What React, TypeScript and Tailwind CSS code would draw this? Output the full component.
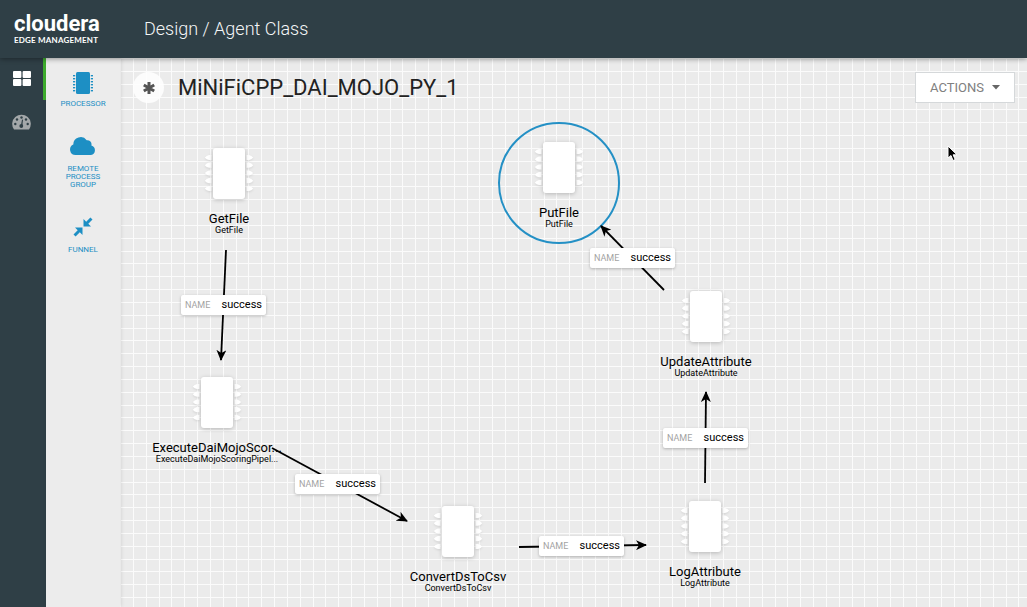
import React from "react";

type NodeItem = { id: string; x: number; y: number; name: string; type: string; selected?: boolean };
type Link = { id: string; x1: number; y1: number; x2: number; y2: number; lx: number; ly: number };

const nodes: NodeItem[] = [
  { id: "get", x: 109, y: 90, name: "GetFile", type: "GetFile" },
  { id: "put", x: 439, y: 84, name: "PutFile", type: "PutFile", selected: true },
  { id: "exec", x: 97, y: 319, name: "ExecuteDaiMojoScor...", type: "ExecuteDaiMojoScoringPipel..." },
  { id: "conv", x: 338, y: 448, name: "ConvertDsToCsv", type: "ConvertDsToCsv" },
  { id: "log", x: 585, y: 443, name: "LogAttribute", type: "LogAttribute" },
  { id: "upd", x: 586, y: 233, name: "UpdateAttribute", type: "UpdateAttribute" },
];

const links: Link[] = [
  { id: "l1", x1: 106, y1: 192, x2: 101, y2: 302, lx: 61, ly: 237 },
  { id: "l2", x1: 152, y1: 390, x2: 287, y2: 463, lx: 175, ly: 416 },
  { id: "l3", x1: 399, y1: 489, x2: 526, y2: 487, lx: 419, ly: 478 },
  { id: "l4", x1: 585, y1: 425, x2: 586, y2: 334, lx: 543, ly: 370 },
  { id: "l5", x1: 544, y1: 232, x2: 481, y2: 168, lx: 470, ly: 190 },
];

const offsets = [0, 13, 26, 39, 51, 64];
const pinRows = [9.5, 17.2, 25, 32.7, 40.5];

function Grid() {
  return (
    <svg className="absolute inset-0 size-full" aria-hidden="true">
      <defs>
        <pattern id="grid" x="0" y="0" width="77" height="77" patternUnits="userSpaceOnUse">
          {offsets.map((o) => (
            <g key={o} fill="#fbfbfb">
              <rect x={o} y="0" width="1" height="77" />
              <rect x="0" y={o} width="77" height="1" />
            </g>
          ))}
        </pattern>
      </defs>
      <rect width="100%" height="100%" fill="url(#grid)" />
    </svg>
  );
}

function Connections() {
  return (
    <svg className="absolute inset-0 size-full" aria-hidden="true">
      <defs>
        <marker id="arrow" viewBox="0 0 11 10" refX="10" refY="5" markerWidth="11" markerHeight="10" markerUnits="userSpaceOnUse" orient="auto">
          <path d="M0 0 11 5 0 10 3 5Z" fill="#000" />
        </marker>
      </defs>
      {links.map((l) => (
        <line key={l.id} x1={l.x1} y1={l.y1} x2={l.x2} y2={l.y2} stroke="#000" strokeWidth="1.8" markerEnd="url(#arrow)" />
      ))}
    </svg>
  );
}

function Chip() {
  return (
    <svg width="60" height="60" viewBox="-30 -4 60 60" className="-mt-1" aria-hidden="true">
      <g fill="#fff" className="drop-shadow-[0_1px_1px_rgba(0,0,0,0.1)]">
        {pinRows.map((y) => (
          <g key={y} transform={`translate(0 ${y})`}>
            <path d="M-17.500-2.600h-2.500q-2.500.6-4.200 2.600 1.700 2 4.200 2.600h2.500z" />
            <path d="M17.500-2.600h2.500q2.500.6 4.200 2.600-1.700 2-4.200 2.600h-2.500z" />
          </g>
        ))}
      </g>
      <rect x="-16" y="0" width="32" height="51" rx="3" fill="#fff" className="drop-shadow-[0_1px_2px_rgba(0,0,0,0.22)]" />
    </svg>
  );
}

function FlowNode({ node }: { node: NodeItem }) {
  return (
    <div className="absolute" style={{ left: node.x, top: node.y }}>
      {node.selected && (
        <div className="absolute -top-5 -left-[61px] size-[122px] rounded-full border-2 border-[#2490c5]" />
      )}
      <div className="relative flex w-40 -translate-x-1/2 flex-col items-center text-center text-black">
        <Chip />
        <div className="mt-[7px] text-[13px] leading-4 whitespace-nowrap">{node.name}</div>
        <div className="text-[9px] leading-[7px] whitespace-nowrap">{node.type}</div>
      </div>
    </div>
  );
}

function LinkLabel({ link }: { link: Link }) {
  return (
    <div
      className="absolute flex h-5 w-[85px] items-center justify-between rounded-xs bg-white px-1 leading-5 shadow-[0_1px_3px_rgba(0,0,0,0.25)]"
      style={{ left: link.lx, top: link.ly }}
    >
      <span className="text-[9px] text-[#a3a3a3]">NAME</span>
      <span className="text-[11px] text-black">success</span>
    </div>
  );
}

function ProcessorIcon() {
  return (
    <svg width="22" height="24" viewBox="0 0 22 24" fill="#1d8fc4" aria-hidden="true">
      <rect x="4" y="1" width="14" height="22" rx="1.5" />
      {[4, 7, 10, 13, 16, 19].map((y) => (
        <g key={y}>
          <rect x="1" y={y} width="2.200" height="1.400" />
          <rect x="18.800" y={y} width="2.200" height="1.400" />
        </g>
      ))}
    </svg>
  );
}

function CloudIcon() {
  return (
    <svg width="26" height="19" viewBox="0 0 26 19" fill="#1d8fc4" aria-hidden="true">
      <path d="M5.500 19A5.500 5.500 0 0 1 3.300 8.500 7.400 7.400 0 0 1 16.700 4.200 4.300 4.300 0 0 1 21.400 9.500 4.900 4.900 0 0 1 21 19Z" />
    </svg>
  );
}

function FunnelIcon() {
  return (
    <svg width="20" height="20" viewBox="0 0 20 20" fill="#1d8fc4" aria-hidden="true">
      <path d="M10.500 9.500V2l2.700 2.700L17.400.5l2.100 2.100-4.200 4.200L18 9.500Z" />
      <path d="M9.500 10.500V18l-2.700-2.700-4.200 4.200-2.100-2.100 4.200-4.200L2 10.500Z" />
    </svg>
  );
}

function Tool({ icon, label }: { icon: React.ReactNode; label: string }) {
  return (
    <button type="button" className="flex w-14 flex-col items-center text-[8px] leading-2 text-[#1d8fc4]">
      <span className="flex h-6 items-start">{icon}</span>
      <span className="mt-[5px]">{label}</span>
    </button>
  );
}

export default function App() {
  return (
    <div className="flex min-h-screen flex-col overflow-hidden bg-[#ebebeb] font-['Roboto',sans-serif]">
      <header className="relative z-20 flex h-[58px] items-center bg-[#2f3f46] shadow-[0_1px_5px_rgba(0,0,0,0.4)]">
        <div className="flex w-[130px] flex-col pl-[14px] text-white">
          <span className="text-[22px] leading-5 font-bold">cloudera</span>
          <span className="mt-[2px] font-['Lato',sans-serif] text-[8px] leading-2 font-bold tracking-wide whitespace-nowrap">
            EDGE MANAGEMENT
          </span>
        </div>
        <h1 className="pl-[14px] text-[18px] leading-6 font-light text-[#f4f6f7]">Design / Agent Class</h1>
      </header>
      <div className="flex flex-1">
        <nav className="flex w-[46px] shrink-0 flex-col bg-[#2f3f46]" aria-label="Main">
          <button type="button" aria-label="Dashboard" className="flex h-[42px] items-center justify-center border-r-3 border-[#3fae2f]">
            <svg width="18" height="16" viewBox="0 0 18 16" fill="#fff" aria-hidden="true">
              <rect width="8.400" height="7" rx="1" />
              <rect x="9.600" width="8.400" height="7" rx="1" />
              <rect y="8" width="8.400" height="7" rx="1" />
              <rect x="9.600" y="8" width="8.400" height="7" rx="1" />
            </svg>
          </button>
          <button type="button" aria-label="Monitor" className="flex h-11 items-center justify-center border-r-3 border-transparent">
            <svg width="19" height="16" viewBox="0 0 19 16" aria-hidden="true">
              <path d="M2 15.500A9.300 9.300 0 1 1 17 15.500Z" fill="#a3a7a9" />
              <g fill="#2f3f46">
                <circle cx="3.300" cy="10" r="1.200" />
                <circle cx="5" cy="5.500" r="1.200" />
                <circle cx="9.500" cy="3.500" r="1.200" />
                <circle cx="14" cy="5.500" r="1.200" />
                <circle cx="15.700" cy="10" r="1.200" />
                <circle cx="9.300" cy="12" r="1.900" />
                <path d="m8.800 12 1.200-6.500 1 .2-.7 6.500Z" />
              </g>
            </svg>
          </button>
        </nav>
        <aside className="relative z-10 flex w-[74px] shrink-0 flex-col items-center bg-[#ececec] pt-[13px] shadow-[1px_0_4px_rgba(0,0,0,0.12)]">
          <Tool icon={<ProcessorIcon />} label="PROCESSOR" />
          <div className="mt-7">
            <Tool icon={<CloudIcon />} label="REMOTE PROCESS GROUP" />
          </div>
          <div className="mt-7">
            <Tool icon={<FunnelIcon />} label="FUNNEL" />
          </div>
        </aside>
        <main className="relative flex-1 overflow-hidden">
          <Grid />
          <div className="relative z-10 flex items-center justify-between py-[14px] pr-3 pl-[13px]">
            <div className="flex items-center gap-[14px]">
              <span className="flex size-[31px] items-center justify-center rounded-full bg-white/85">
                <svg width="14" height="14" viewBox="-7 -7 14 14" stroke="#555" strokeWidth="3" aria-hidden="true">
                  <path d="M0-6V6M-5.200-3 5.200 3M-5.200 3 5.200-3" />
                </svg>
              </span>
              <h2 className="text-[22px] leading-7 text-[#222]">MiNiFiCPP_DAI_MOJO_PY_1</h2>
            </div>
            <button type="button" className="flex h-[31px] items-center gap-2 border border-[#d5d8da] bg-white px-[14px] text-[13px] text-[#808080]">
              ACTIONS
              <svg width="8" height="5" viewBox="0 0 8 5" fill="#666" aria-hidden="true">
                <path d="M0 0H8L4 4.500Z" />
              </svg>
            </button>
          </div>
          {nodes.map((n) => (
            <FlowNode key={n.id} node={n} />
          ))}
          <Connections />
          {links.map((l) => (
            <LinkLabel key={l.id} link={l} />
          ))}
          <svg className="absolute top-[87px] left-[827px] z-20" width="11" height="17" viewBox="0 0 11 17" aria-hidden="true">
            <path d="M1 1v12l3-2.500 2 5 2.200-1-2.100-4.700H10Z" fill="#000" stroke="#fff" strokeWidth="1" />
          </svg>
        </main>
      </div>
    </div>
  );
}
